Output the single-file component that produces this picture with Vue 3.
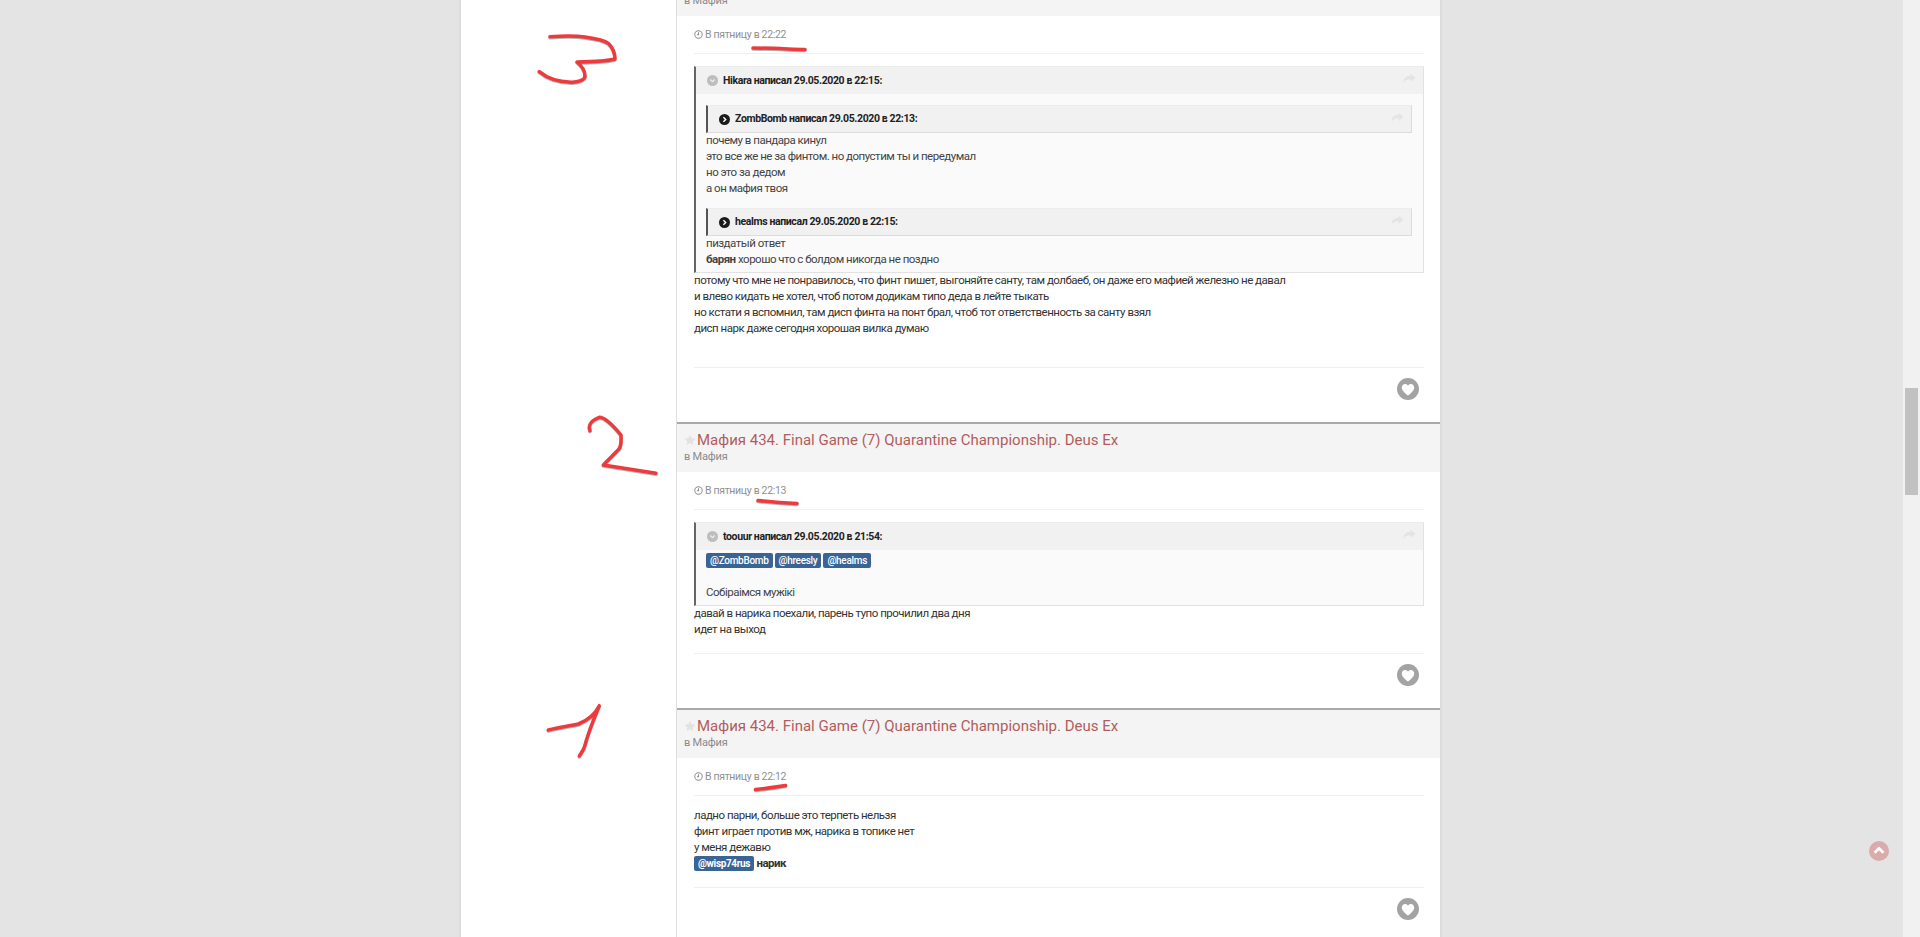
<template>
  <div class="page">
    <div class="viewport">
      <div class="column">
        <aside class="side"></aside>
        <main class="feed">
          <article v-for="post in posts" :key="post.id" class="post">
            <header class="post-head">
              <h2 class="post-title">
                <svg class="star" viewBox="0 0 24 24"><path d="M12 1.5l3.3 7 7.7 1-5.6 5.3 1.4 7.7L12 17.8 5.2 22.5l1.4-7.7L1 9.5l7.7-1z" /></svg>
                <span>{{ post.topic }}</span>
              </h2>
              <div class="post-forum">в Мафия</div>
            </header>
            <div class="post-inner">
              <div class="post-time">
                <svg class="clock" viewBox="0 0 16 16"><circle cx="8" cy="8" r="6.6" /><path d="M8 4v4.6H5.2" /></svg>
                <span>В пятницу в {{ post.time }}</span>
              </div>
              <div class="post-body">
                <blockquote v-if="post.quote" class="quote">
                  <div class="quote-head">
                    <svg class="qicon" viewBox="0 0 16 16"><circle cx="8" cy="8" r="8" fill="#bdbdbd" /><path d="M4.8 6.600L8 9.800l3.200-3.200" fill="none" stroke="#eee" stroke-width="1.8" /></svg>
                    <span>{{ post.quote.author }} написал {{ post.quote.date }}:</span>
                    <svg class="share" viewBox="0 0 16 16"><path d="M10 2l6 5-6 5V9C6 9 3 10 1.5 14 1 8 4 4.6 10 4.6z" /></svg>
                  </div>
                  <div class="quote-body">
                    <template v-for="n in post.quote.nested" :key="n.author">
                      <blockquote class="quote-nested">
                        <div class="quote-head">
                          <svg class="qicon dark" viewBox="0 0 16 16"><circle cx="8" cy="8" r="8" fill="#1b1b1b" /><path d="M6.400 4.600L9.800 8l-3.400 3.400" fill="none" stroke="#fff" stroke-width="2" /></svg>
                          <span>{{ n.author }} написал {{ n.date }}:</span>
                          <svg class="share" viewBox="0 0 16 16"><path d="M10 2l6 5-6 5V9C6 9 3 10 1.5 14 1 8 4 4.6 10 4.6z" /></svg>
                        </div>
                      </blockquote>
                      <div v-for="line in n.lines" :key="line" class="line" v-html="line"></div>
                    </template>
                    <template v-if="post.quote.mentions">
                      <div class="line">
                        <a v-for="m in post.quote.mentions" :key="m" class="mention">{{ m }}</a>
                      </div>
                      <div class="line"></div>
                      <div class="line">Собіраімся мужікі</div>
                    </template>
                  </div>
                </blockquote>
                <div v-for="line in post.lines" :key="line" class="line">{{ line }}</div>
                <div v-if="post.extraBlank" class="line short"></div>
                <div v-if="post.mention" class="line">
                  <a class="mention tight">{{ post.mention }}</a> <b>нарик</b>
                </div>
              </div>
              <footer class="post-foot">
                <svg class="heart" viewBox="0 0 22 22"><circle cx="11" cy="11" r="11" fill="#a3a3a3" /><path d="M11 17.600C8 15 4.800 12.700 4.800 9.400 4.800 7.300 6.300 6 8 6c1.300 0 2.400.6 3 1.800C11.600 6.600 12.700 6 14 6c1.700 0 3.200 1.300 3.200 3.400 0 3.300-3.200 5.600-6.200 8.200z" fill="#fff" /></svg>
              </footer>
            </div>
          </article>
        </main>
      </div>
    </div>
    <div class="scrollbar"><div class="thumb"></div></div>

    <button class="to-top">
      <svg viewBox="0 0 20 20"><path d="M5.500 11.800L10 7.400l4.500 4.400" fill="none" stroke="#fff" stroke-width="2.800" /></svg>
    </button>

    <!-- пометки красным поверх скриншота -->
    <svg class="marks" viewBox="0 0 1920 937" fill="none">
      <path d="M550 36.700C560 36 575 35.500 585 37S604 40 608.300 43.300C612 47 615 52 615 59C608 61 596 61.700 577 62C582 66 585 70 585 76C585 80 578 82.500 571 82.300C560 82 548 79 539.300 71.700" />
      <path d="M590 430.700C588 425 590 421 599.300 417.300C604 417 611 423 621 435C621 440 622 444 619 449L603.300 465L656 473.300" />
      <path d="M548.300 730C560 727 570 726 578.300 724C586 721 594 716 599.300 705.700C595 716 589 730 585 745C584 750 581 753 579.300 756" />
      <path d="M753 48C770 48 788 49 805 49.500" />
      <path d="M758 500.500C772 502 785 503 797 503.500" />
      <path d="M755.500 789.500C765 788.500 776 787 785.500 785.500" />
    </svg>
  </div>
</template>

<script setup>
const topic = 'Мафия 434. Final Game (7) Quarantine Championship. Deus Ex'

const posts = [
  {
    id: 3,
    topic,
    time: '22:22',
    quote: {
      author: 'Hikara',
      date: '29.05.2020 в 22:15',
      nested: [
        {
          author: 'ZombBomb',
          date: '29.05.2020 в 22:13',
          lines: ['почему в пандара кинул', 'это все же не за финтом. но допустим ты и передумал', 'но это за дедом', 'а он мафия твоя'],
        },
        {
          author: 'healms',
          date: '29.05.2020 в 22:15',
          lines: ['пиздатый ответ', '<b>барян</b> хорошо что с болдом никогда не поздно'],
        },
      ],
    },
    lines: [
      'потому что мне не понравилось, что финт пишет, выгоняйте санту, там долбаеб, он даже его мафией железно не давал',
      'и влево кидать не хотел, чтоб потом додикам типо деда в лейте тыкать',
      'но кстати я вспомнил, там дисп финта на понт брал, чтоб тот ответственность за санту взял',
      'дисп нарк даже сегодня хорошая вилка думаю',
    ],
    extraBlank: true,
  },
  {
    id: 2,
    topic,
    time: '22:13',
    quote: {
      author: 'toouur',
      date: '29.05.2020 в 21:54',
      nested: [],
      mentions: ['@ZombBomb', '@hreesly', '@healms'],
    },
    lines: ['давай в нарика поехали, парень тупо прочилил два дня', 'идет на выход'],
  },
  {
    id: 1,
    topic,
    time: '22:12',
    lines: ['ладно парни, больше это терпеть нельзя', 'финт играет против мж, нарика в топике нет', 'у меня дежавю'],
    mention: '@wisp74rus',
  },
]
</script>

<style>
html, body { margin: 0; height: 100%; overflow: hidden; background: #e4e4e4; }
</style>

<style scoped>
.page { position: relative; display: flex; width: 1920px; height: 937px; overflow: hidden; background: #e4e4e4; font-family: Roboto, "Liberation Sans", sans-serif; font-size: 11.5px; letter-spacing: -.5px; line-height: 16px; color: #333; }
.viewport { flex: 1; min-width: 0; overflow: hidden; }
.column { display: grid; grid-template-columns: 216px 1fr; width: 979px; margin: -34px 0 0 459px; background: #fff; border: solid #dcdcdc; border-width: 0 2px; }
.side { border-right: 1px solid #ddd; }
.feed { min-width: 0; }

.post-head { height: 48px; border-top: 2px solid #a9a9a9; background: #f4f4f4; padding-left: 7px; }
.post-title { display: flex; align-items: center; margin: 0; padding-top: 6px; height: 20px; font-size: 15px; letter-spacing: 0; font-weight: 400; line-height: 20px; color: #b25d5d; }
.star { width: 12px; height: 12px; margin-right: 1px; fill: #e2e2e2; flex: none; }
.post-forum { height: 14px; line-height: 14px; font-size: 11px; letter-spacing: -.2px; color: #8b8b8b; }

.post-inner { padding: 0 16px 0 17px; }
.post-time { display: flex; align-items: center; height: 16px; padding: 11px 0 10px; line-height: 16px; font-size: 10.5px; letter-spacing: -.33px; color: #8f8f8f; border-bottom: 1px solid #efefef; }
.clock { width: 9px; height: 9px; margin: -1px 2px 0 0; fill: none; stroke: #8f8f8f; stroke-width: 1.800; }
.post-body { padding: 12px 0 15px; }
.line { height: 14px; padding-bottom: 2px; line-height: 14px; white-space: nowrap; }
.line.short { height: 13px; }

.quote { margin: 0; background: #fafafa; border: 1px solid #e2e2e2; border-left: 2px solid #666; border-top-color: #ececec; }
.quote-head { display: flex; align-items: center; background: #f1f1f1; font-size: 10.5px; letter-spacing: -.38px; font-weight: 700; color: #222; }
.quote > .quote-head { height: 27px; padding-left: 11px; }
.qicon { width: 11px; height: 11px; margin-right: 5px; flex: none; }
.share { width: 14px; height: 13px; margin: -4px 7px 0 auto; fill: #e4e4e4; flex: none; }
.quote-body { padding: 3px 11px 4px 10px; color: #444; }
.quote-nested { margin: 8px 0 0; }
.quote-nested ~ .quote-nested { margin-top: 11px; }
.quote-nested .quote-head { padding-left: 11px; height: 28px; border: solid #dcdcdc; border-width: 1px 1px 1px 0; border-top-color: #ececec; border-left: 2px solid #555; box-sizing: border-box; }
.mention { display: inline-block; height: 15px; margin-right: 2px; padding: 0 4px; border-radius: 2px; background: #3a6496; color: #fff; font-size: 10px; letter-spacing: -.3px; line-height: 15px; font-weight: 500; vertical-align: top; }
.mention.tight { font-weight: 700; letter-spacing: -.35px; margin-right: 0; }

.post-foot { display: flex; justify-content: flex-end; padding: 10px 5px 22px 0; border-top: 1px solid #efefef; }
.heart { width: 22px; height: 22px; display: block; }

.scrollbar { flex: none; width: 17px; background: #f1f1f1; }
.thumb { width: 13px; height: 107px; margin: 388px 0 0 2px; background: #c1c1c1; }

.to-top { position: absolute; left: 1869px; top: 841px; width: 20px; height: 20px; padding: 0; border: 0; border-radius: 50%; background: #d9abab; }
.to-top svg { display: block; width: 20px; height: 20px; }

.marks { position: absolute; inset: 0; width: 1920px; height: 937px; pointer-events: none; filter: drop-shadow(0 1px 0 rgba(0, 0, 0, .3)); }
.marks path { stroke: #ee3a3c; stroke-width: 3.500; stroke-linecap: round; stroke-linejoin: round; }
</style>
